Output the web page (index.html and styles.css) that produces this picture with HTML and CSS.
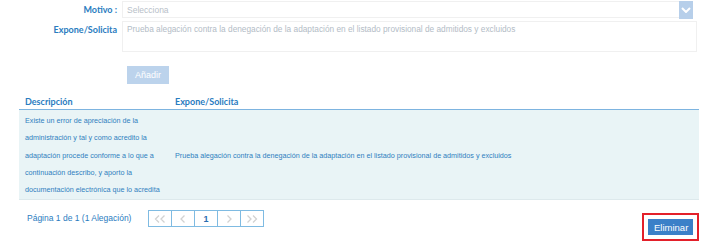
FILE: index.html
```html
<!DOCTYPE html>
<html lang="es">
<head>
  <meta charset="UTF-8" />
  <title>Alegaciones</title>
  <link rel="stylesheet" href="styles.css">
</head>
<body>
  <div class="page">

    <!-- Form -->
    <div class="form">
      <div class="form-row">
        <label class="form-label">Motivo :</label>
        <div class="select">
          <span class="select-text">Selecciona</span>
          <span class="select-arrow">
            <svg width="10" height="6" viewBox="0 0 10 6"><path d="M1 1 L5 5 L9 1" fill="none" stroke="#fff" stroke-width="2"/></svg>
          </span>
        </div>
      </div>
      <div class="form-row">
        <label class="form-label">Expone/Solicita</label>
        <div class="textarea">Prueba alegación contra la denegación de la adaptación en el listado provisional de admitidos y excluidos</div>
      </div>
      <div class="form-actions">
        <button class="btn btn-disabled">Añadir</button>
      </div>
    </div>

    <!-- Table -->
    <table class="grid">
      <thead>
        <tr>
          <th class="col-desc">Descripción</th>
          <th>Expone/Solicita</th>
        </tr>
      </thead>
      <tbody>
        <tr>
          <td class="col-desc">Existe un error de apreciación de la administración y tal y como acredito la adaptación procede conforme a lo que a continuación describo, y aporto la documentación electrónica que lo acredita</td>
          <td>Prueba alegación contra la denegación de la adaptación en el listado provisional de admitidos y excluidos</td>
        </tr>
      </tbody>
    </table>

    <!-- Footer -->
    <div class="footer">
      <span class="page-info">Página 1 de 1 (1 Alegación)</span>
      <div class="pager">
        <span class="pager-cell">
          <svg width="12" height="8" viewBox="0 0 12 8"><path d="M5 0.5 L1.5 4 L5 7.5 M10.5 0.5 L7 4 L10.5 7.5" fill="none" stroke="#d2d2d2" stroke-width="1.3"/></svg>
        </span>
        <span class="pager-cell">
          <svg width="6" height="8" viewBox="0 0 6 8"><path d="M4.5 0.5 L1 4 L4.5 7.5" fill="none" stroke="#d2d2d2" stroke-width="1.3"/></svg>
        </span>
        <span class="pager-cell current">1</span>
        <span class="pager-cell">
          <svg width="6" height="8" viewBox="0 0 6 8"><path d="M1.5 0.5 L5 4 L1.5 7.5" fill="none" stroke="#d2d2d2" stroke-width="1.3"/></svg>
        </span>
        <span class="pager-cell">
          <svg width="12" height="8" viewBox="0 0 12 8"><path d="M1.5 0.5 L5 4 L1.5 7.5 M7 0.5 L10.5 4 L7 7.5" fill="none" stroke="#d2d2d2" stroke-width="1.3"/></svg>
        </span>
      </div>
      <div class="highlight">
        <button class="btn btn-primary">Eliminar</button>
      </div>
    </div>

  </div>
</body>
</html>
```

FILE: styles.css
```css
html, body {
  margin: 0;
  padding: 0;
  background: #fff;
  font-family: "Liberation Sans", Arial, sans-serif;
}

.page {
  width: 708px;
  height: 249px;
  overflow: hidden;
  padding-top: 1px;
  box-sizing: border-box;
}

/* Form */
.form-row {
  display: flex;
  align-items: flex-start;
  gap: 5px;
  margin-bottom: 3px;
}

.form-label {
  width: 117px;
  flex: none;
  text-align: right;
  font-family: Lato, sans-serif;
  font-weight: 700;
  font-size: 9px;
  color: #2a7cc0;
  line-height: 17px;
}

.select {
  width: 571px;
  height: 17px;
  border: 1px solid #f0f0f0;
  display: flex;
  align-items: center;
  justify-content: space-between;
  box-sizing: border-box;
}

.select-text {
  padding-left: 4px;
  font-size: 8.5px;
  color: #b8c0c8;
}

.select-arrow {
  width: 14px;
  height: 18px;
  margin-right: -1px;
  background: #b7cfea;
  display: flex;
  align-items: center;
  justify-content: center;
}

.textarea {
  width: 575px;
  height: 31px;
  border: 1px solid #f0f0f0;
  box-sizing: border-box;
  padding: 2px 4px;
  font-size: 8.3px;
  color: #b3bcc6;
  line-height: 10px;
}

.form-actions {
  padding: 9px 0 0 127px;
}

.btn {
  border: none;
  font-family: "Liberation Sans", Arial, sans-serif;
  color: #fff;
  cursor: pointer;
}

.btn-disabled {
  width: 42px;
  height: 18px;
  font-size: 9px;
  background: #bcd3ec;
}

/* Table */
.grid {
  margin: 9px 0 0 19px;
  width: 680px;
  border-collapse: collapse;
  table-layout: fixed;
}

.grid th {
  text-align: left;
  font-family: Lato, sans-serif;
  font-weight: 700;
  font-size: 9px;
  color: #2a7cc0;
  padding: 0 6px;
  height: 16px;
  border-bottom: 1px solid #7db4e0;
}

.grid td {
  background: #e9f4f6;
  font-size: 7.2px;
  color: #2f7fc0;
  line-height: 17.3px;
  padding: 2px 6px 1px;
  vertical-align: middle;
  border-bottom: 1px solid #dde9ec;
}

.grid .col-desc {
  width: 144px;
  padding-right: 0;
}

/* Footer */
.footer {
  display: flex;
  align-items: flex-start;
  padding: 10px 0 0 27px;
}

.page-info {
  font-size: 8.5px;
  color: #2a7cc0;
  width: 121px;
  line-height: 17px;
}

.pager {
  display: flex;
  border: 1px solid #7fbbe2;
  height: 15px;
}

.pager-cell {
  width: 22px;
  border-right: 1px solid #7fbbe2;
  display: flex;
  align-items: center;
  justify-content: center;
  font-size: 9px;
  font-weight: 700;
}

.pager-cell:last-child {
  border-right: none;
}

.pager-cell.current {
  color: #2a6cb0;
}

.highlight {
  margin-left: auto;
  margin-right: 9px;
  margin-top: 3px;
  border: 2px solid #e3202a;
  padding: 4px;
}

.btn-primary {
  display: block;
  width: 45px;
  height: 16px;
  font-size: 9.5px;
  background: #3b80c8;
}
```
